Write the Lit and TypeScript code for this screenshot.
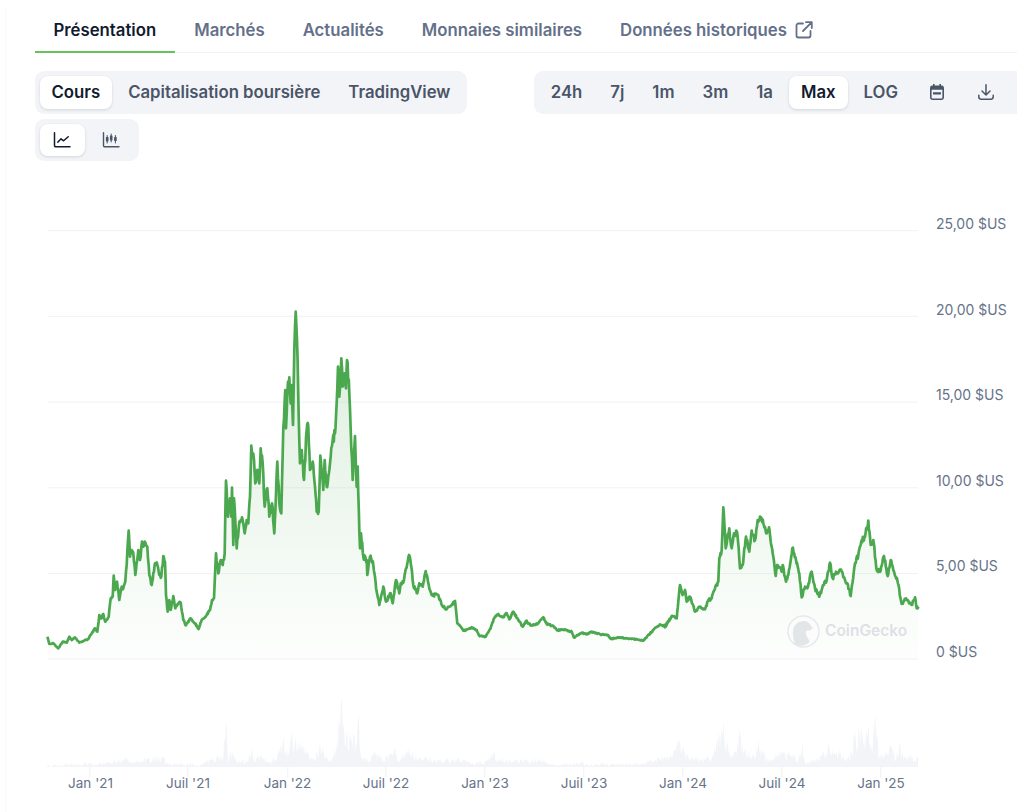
import { LitElement, html, css, svg } from "lit";
import { customElement } from "lit/decorators.js";

type P = [number, number];
const z3: number[] = [52,1040,58,1062,70,1060,85,1075,98,1055,110,1058,118,1040,125,1050,135,1042,148,1058,165,1050,172,1050,185,1030,195,1015,202,1025,208,975,215,985,220,972,226,995,236,980,242,925,248,920,251,857,256,900,261,875,268,930,275,890,280,895,286,875,290,825,296,722,300,800,305,780,310,790,316,855,325,780,330,810,336,755,340,770,346,757,352,770,358,855,365,885,375,820,382,825,388,855,394,860,400,798,405,815,408,915,413,965,418,930,422,960,430,918,436,955,445,940,452,938,460,990,468,1006,482,985,495,1000,506,1017,515,990,530,975,540,960,546,930,552,925,558,790,565,850,572,810,578,825,584,790,588,572,594,680,600,625,604,680,606,593,610,765,612,625,620,775,628,695,636,682,644,730,650,690,655,700,660,620,664,467,672,510,676,580,682,540,688,580,692,475,698,520,704,650,712,595,718,680,726,640,733,730,742,515,748,640,754,670,760,415,766,300,768,415,772,310,778,262,782,340,785,285,789,405,793,180,797,65,801,150,806,380,810,520,815,480,822,570,830,420,835,410,840,540,848,515,855,590,860,665,866,665,871,497,880,600,884,510,890,590,900,520,908,450,915,430,918,380,924,230,928,320,934,205,938,290,944,250,948,295,951,210,958,310,962,420,968,570,975,438,980,590,983,530,988,720,990,775,993,730,1000,800,1010,810,1012,855,1020,800,1030,825,1040,905,1048,945];
const z4: number[] = [40,290,48,335,62,310,68,340,78,270,88,310,92,280,100,278,108,235,117,195,124,230,130,285,142,310,148,280,158,290,167,243,178,295,185,315,205,315,215,345,228,358,245,345,255,333,262,400,282,422,305,412,320,420,328,437,347,440,360,418,372,385,385,372,400,382,410,370,418,388,430,365,445,390,458,410,468,393,485,407,505,400,520,382,530,402,550,408,560,420,585,420,605,425,612,443,635,428,650,433,665,425,690,433,715,436,722,447,745,442,790,447,820,452,845,425,870,403,885,408,900,385];
const z5: number[] = [15,412,35,378,50,385,60,285,68,315,75,300,80,335,90,320,105,365,120,350,135,358,145,330,155,325,165,295,175,275,178,205,185,180,190,52,197,175,208,115,215,175,222,130,232,130,240,235,248,225,258,140,268,185,275,122,285,150,293,90,300,80,310,100,320,130,327,112,338,190,347,258,352,225,365,245,368,225,378,275,385,255,397,175,408,210,418,250,425,322,435,290,442,295,455,245,465,295,478,320,490,285,500,270,510,218,518,265,528,245,545,245,555,270,562,280,572,318,585,220,595,195,605,150,615,140,625,92,632,165,640,150,650,240,660,245,672,198,683,258,692,210,700,240,712,270,725,342,738,325,755,345,765,322,770,355,775,350];
const v6: number[] = [142,258,250,255,255,245,262,256,330,248,385,235,395,250,490,232,500,252,600,256,640,240,670,235,678,120,684,240,698,215,710,245,745,245,755,205,765,245,780,230,810,250,835,220,850,170,857,225,870,190,885,180,905,195,920,225,945,245,962,195,975,235,995,240,1010,200,1018,140,1023,65,1028,140,1035,200,1042,170,1055,180,1070,200,1077,120,1083,230,1100,240,1130,225,1150,245,1188,215,1195,245,1222,210,1240,235,1280,235,1300,245,1370,240,1420,252,1460,245,1480,220,1490,240,1536,245];
const v7: number[] = [90,240,110,255,200,252,210,245,220,255,400,252,440,235,470,240,497,200,510,215,530,240,580,240,605,225,620,180,636,155,650,215,670,215,684,170,695,215,720,225,745,205,770,245,800,225,820,225,860,240,870,200,880,250,920,240,950,200,970,225,985,215,1000,240,1020,220,1027,150,1035,200,1048,140,1058,210,1068,150,1080,215,1090,105,1100,235,1140,210,1150,240,1165,195,1175,240,1218,235];

function conv(a: number[], ox: number, oy: number): P[] {
  const r: P[] = [];
  for (let i = 0; i < a.length; i += 2) r.push([ox + a[i] / 3, oy + a[i + 1] / 3]);
  return r;
}
function rng(seed: number) {
  let s = seed;
  return () => {
    s = (s * 16807) % 2147483647;
    return s / 2147483647 - 0.5;
  };
}
function detail(pts: P[], base: number, amp: number, step: number, seed: number): P[] {
  const r = rng(seed);
  const out: P[] = [];
  for (let i = 0; i < pts.length - 1; i++) {
    const [x0, y0] = pts[i];
    const [x1, y1] = pts[i + 1];
    const n = Math.max(1, Math.round((x1 - x0) / step));
    for (let k = 0; k < n; k++) {
      const t = k / n;
      const y = y0 + (y1 - y0) * t;
      const j = k === 0 ? 0 : r() * amp * Math.max(4, base - y);
      out.push([x0 + (x1 - x0) * t, Math.min(base, y + j)]);
    }
  }
  out.push(pts[pts.length - 1]);
  return out;
}
const toPath = (p: P[]) => p.map((q, i) => `${i ? "L" : "M"}${q[0].toFixed(1)} ${q[1].toFixed(1)}`).join("");

const price = detail([...conv(z3, 30, 290), ...conv(z4, 370, 490), ...conv(z5, 660, 490)], 659, 0.05, 0.6, 4711);
const linePath = toPath(price);
const areaPath = `${linePath}L918 659L47.3 659Z`;
const vol = detail([...conv(v6, 0, 680), ...conv(v7, 512, 680)], 767, 1.0, 0.7, 991);
const volPath = `${toPath(vol)}L918 767L47.3 767Z`;

const grid = [230.7, 316.4, 402.1, 487.8, 573.5, 659];
const yLabels: [string, number][] = [["25,00 $US", 225], ["20,00 $US", 311], ["15,00 $US", 396], ["10,00 $US", 482], ["5,00 $US", 567], ["0 $US", 653]];
const xLabels: [string, number][] = [["Jan '21", 90.5], ["Juil '21", 188], ["Jan '22", 287.5], ["Juil '22", 386], ["Jan '23", 485], ["Juil '23", 584], ["Jan '24", 683], ["Juil '24", 782], ["Jan '25", 881]];
const xTicks = [89.3, 187.3, 287.3, 385.3, 484.3, 583.3, 682.3, 781.3, 880.3];

const lineIcon = html`<svg class="ic" viewBox="0 0 18 18" fill="none" stroke="currentColor" stroke-width="1.5" stroke-linecap="round" stroke-linejoin="round"><path d="M1.5 1.8V14.6a1.2 1.2 0 0 0 1.2 1.2H17"/><path d="M4.8 11.2 8 7.8l2.6 2 4.6-4"/></svg>`;
const candleIcon = html`<svg class="ic" viewBox="0 0 18 18" fill="none" stroke="currentColor" stroke-width="1.4" stroke-linecap="round"><path d="M1.5 1.8V14.6a1.2 1.2 0 0 0 1.2 1.2H17"/><path d="M5.2 4.500v7.500M9.200 3v8M13.400 4.500V12" stroke-width="1"/><rect x="3.900" y="6" width="2.600" height="4.400" rx=".6" fill="currentColor" stroke="none"/><rect x="7.900" y="4.400" width="2.600" height="5" rx=".6" fill="currentColor" stroke="none"/><rect x="12.100" y="6" width="2.600" height="4" rx=".6" fill="currentColor" stroke="none"/></svg>`;
const calIcon = html`<svg class="ic" viewBox="0 0 18 18"><path fill="currentColor" fill-rule="evenodd" d="M5 1h1.6v1.6h4.8V1H13v1.6h.6A2.4 2.4 0 0 1 16 5v9.6a2.4 2.4 0 0 1-2.4 2.4H4.4A2.4 2.4 0 0 1 2 14.6V5a2.4 2.4 0 0 1 2.4-2.4H5V1ZM3.6 6.800v7.800c0 .44.36.8.8.8h9.200c.44 0 .8-.36.8-.8V6.800H3.600Z"/><rect x="5" y="9.200" width="8" height="2.400" rx=".4" fill="currentColor"/></svg>`;
const dlIcon = html`<svg class="ic" viewBox="0 0 18 18" fill="none" stroke="currentColor" stroke-width="1.5" stroke-linecap="round" stroke-linejoin="round"><path d="M9 1.800v10M5 8l4 4 4-4"/><path d="M1.800 12.200v1.600a2.400 2.400 0 0 0 2.400 2.400h9.600a2.400 2.400 0 0 0 2.400-2.400v-1.600"/></svg>`;
const extIcon = html`<svg class="ext" viewBox="0 0 18 18" fill="none" stroke="currentColor" stroke-width="1.8" stroke-linecap="round" stroke-linejoin="round"><path d="M8 2.500H3.500A2 2 0 0 0 1.500 4.500v10a2 2 0 0 0 2 2h10a2 2 0 0 0 2-2V10"/><path d="M11 1.200h5.800V7M16.600 1.400 8 10"/></svg>`;

@customElement("app-root")
export class AppRoot extends LitElement {
  static styles = css`
    :host {
      display: block;
      width: 1024px;
      height: 812px;
      overflow: hidden;
      background: #fff;
      font-family: Inter, "Liberation Sans", sans-serif;
    }
    .frame {
      margin: 8px 0 0 5px;
      border-left: 1.5px solid #f8f9fb;
      padding-left: 28.5px;
      width: 982px;
      height: 804px;
    }
    .tabs {
      display: flex;
      height: 45px;
      border-bottom: 1px solid #f2f3f5;
      box-sizing: border-box;
    }
    .tab {
      display: flex;
      align-items: center;
      gap: 8px;
      height: 45px;
      box-sizing: border-box;
      padding: 0 19px 1px;
      font-size: 16.75px;
      font-weight: 600;
      color: #64708a;
    }
    .tab.on {
      color: #111a2e;
      border-bottom: 2px solid #67c15c;
      padding-bottom: 0;
    }
    .ext {
      width: 18px;
      height: 18px;
    }
    .controls {
      display: flex;
      justify-content: space-between;
      align-items: flex-start;
      margin-top: 18px;
    }
    .left {
      display: flex;
      flex-direction: column;
      align-items: flex-start;
      gap: 5px;
    }
    .pill {
      display: flex;
      gap: 4px;
      padding: 5px;
      background: #f2f4f8;
      border-radius: 9px;
    }
    .pill.right {
      border-radius: 9px 0 0 9px;
      padding-right: 8.5px;
    }
    .btn {
      height: 32.5px;
      padding: 0 12px;
      display: flex;
      align-items: center;
      justify-content: center;
      font-size: 16.75px;
      font-weight: 600;
      color: #4a5568;
      border-radius: 8px;
      white-space: nowrap;
    }
    .btn.on {
      background: #fff;
      color: #111a2e;
      box-shadow: 0 1px 3px rgba(16, 24, 40, 0.14);
    }
    .btn.icon {
      width: 45px;
      padding: 0;
      box-sizing: border-box;
    }
    .ic {
      width: 18px;
      height: 18px;
    }
    .chart {
      display: block;
      width: 1024px;
      height: 651px;
      margin-left: -35px;
    }
    .yl {
      font-size: 14px;
      fill: #667389;
      dominant-baseline: middle;
    }
    .xl {
      font-size: 13.5px;
      fill: #667389;
      text-anchor: middle;
      dominant-baseline: middle;
    }
    .brand {
      font-size: 15.5px;
      font-weight: 600;
      fill: #dde1e5;
      dominant-baseline: middle;
    }
  `;

  render() {
    return html`<div class="frame">
      <div class="tabs">
        <div class="tab on">Présentation</div>
        <div class="tab">Marchés</div>
        <div class="tab">Actualités</div>
        <div class="tab">Monnaies similaires</div>
        <div class="tab">Données historiques ${extIcon}</div>
      </div>
      <div class="controls">
        <div class="left">
          <div class="pill">
            <div class="btn on">Cours</div>
            <div class="btn">Capitalisation boursière</div>
            <div class="btn">TradingView</div>
          </div>
          <div class="pill">
            <div class="btn icon on">${lineIcon}</div>
            <div class="btn icon">${candleIcon}</div>
          </div>
        </div>
        <div class="pill right">
          <div class="btn">24h</div>
          <div class="btn">7j</div>
          <div class="btn">1m</div>
          <div class="btn">3m</div>
          <div class="btn">1a</div>
          <div class="btn on">Max</div>
          <div class="btn">LOG</div>
          <div class="btn icon">${calIcon}</div>
          <div class="btn icon">${dlIcon}</div>
        </div>
      </div>
      <svg class="chart" viewBox="0 161 1024 651">
        <defs>
          <linearGradient id="fill" gradientUnits="userSpaceOnUse" x1="0" y1="311" x2="0" y2="659">
            <stop offset="0" stop-color="#4ba84f" stop-opacity=".2"></stop>
            <stop offset="1" stop-color="#4ba84f" stop-opacity=".01"></stop>
          </linearGradient>
        </defs>
        ${grid.map((y) => svg`<rect x="47.3" y=${y - 0.5} width="870.7" height="1" fill="#f1f2f4"></rect>`)}
        <path d=${volPath} fill="#f2f4f7"></path>
        ${xTicks.map((x) => svg`<rect x=${x} y="767" width="1" height="10" fill="#f0f1f4"></rect>`)}
        <path d=${areaPath} fill="url(#fill)"></path>
        <path d=${linePath} fill="none" stroke="#4ba84f" stroke-width="2.7" stroke-linejoin="round"></path>
        <g>
          <circle cx="803.5" cy="631.5" r="15.5" fill="#fbfcfb" stroke="#e6e9ea" stroke-width="1.5"></circle>
          <path d="M795 644c-2-6-3-12-1-17 2-4 6-6 10-6 3 0 6 2 7 5 1 1 2 2 1 3-1 2-4 1-6 2-1 3 1 6 3 9 1 2-1 4-4 5-3 1-7 1-10-1Z" fill="#e3e6e8"></path>
          <text class="brand" x="825" y="631.5">CoinGecko</text>
        </g>
        ${yLabels.map(([t, y]) => svg`<text class="yl" x="936" y=${y}>${t}</text>`)}
        ${xLabels.map(([t, x]) => svg`<text class="xl" x=${x} y="784">${t}</text>`)}
      </svg>
    </div>`;
  }
}
